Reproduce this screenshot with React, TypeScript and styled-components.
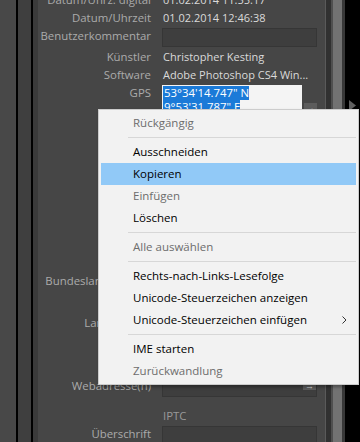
import { styled, createGlobalStyle } from "styled-components";

const Global = createGlobalStyle`
  html, body {
    margin: 0;
    padding: 0;
    background: #000;
    overflow: hidden;
  }
`;

const Screen = styled.div`
  position: relative;
  width: 360px;
  height: 442px;
  overflow: hidden;
  display: flex;
  font-family: "Open Sans", "Noto Sans", sans-serif;
  font-size: 11.4px;
`;

const Strip = styled.div<{ $w: number; $bg: string }>`
  flex: 0 0 ${(p) => p.$w}px;
  background: ${(p) => p.$bg};
`;

const Edge = styled.div`
  flex: 0 0 15px;
  background: #000;
  display: flex;
  justify-content: center;
  padding-top: 100px;
`;

const Panel = styled.div`
  flex: 0 0 287px;
  background: #464646;
  display: flex;
  flex-direction: column;
  overflow: hidden;
`;

const Rows = styled.div<{ $top?: number }>`
  display: grid;
  grid-template-columns: 113px 155px;
  column-gap: 11px;
  margin-top: ${(p) => p.$top ?? 0}px;
`;

const Label = styled.div<{ $h?: number }>`
  height: ${(p) => p.$h ?? 18}px;
  line-height: 18px;
  text-align: right;
  color: #ababab;
  white-space: nowrap;
`;

const Value = styled.div<{ $h?: number }>`
  height: ${(p) => p.$h ?? 18}px;
  line-height: 18px;
  font-size: 11px;
  color: #dadada;
  white-space: nowrap;
  overflow: hidden;
  padding-left: 1px;
`;

const Field = styled.div<{ $h?: number }>`
  height: ${(p) => p.$h ?? 19}px;
  margin: 1px 0;
  box-sizing: border-box;
  background: #3e3e3e;
  border: 1px solid #363636;
  position: relative;
`;

const GpsWrap = styled.div`
  display: flex;
  align-items: flex-start;
  gap: 2px;
  padding-top: 1px;
`;

const GpsBox = styled.div`
  width: 141px;
  height: 30px;
  background: #f4f4f4;
  padding: 1px;
  box-sizing: border-box;
  line-height: 14px;
  font-size: 11.4px;
`;

const Selected = styled.span`
  display: inline-block;
  background: #1b7ad8;
  color: #fff;
  padding-left: 1px;
  height: 14px;
`;

const ArrowBtn = styled.div<{ $top: number }>`
  width: 13px;
  height: 9px;
  margin-top: ${(p) => p.$top}px;
  background: #5c5c5c;
  color: #ddd;
  font-size: 9px;
  line-height: 9px;
  text-align: center;
`;

const FieldArrow = styled(ArrowBtn)`
  position: absolute;
  right: 0;
  top: 2px;
  margin: 0;
`;

const Divider = styled.div<{ $mt: number }>`
  height: 1px;
  background: #595959;
  margin-top: ${(p) => p.$mt}px;
`;

const Heading = styled.div`
  padding-left: 125px;
  color: #999;
  line-height: 18px;
  margin-top: 2px;
`;

const Menu = styled.div`
  position: absolute;
  left: 98px;
  top: 109px;
  width: 261px;
  box-sizing: border-box;
  background: #f2f2f2;
  border: 1px solid #cccccc;
  padding: 2px;
  box-shadow: 2px 2px 3px rgba(0, 0, 0, 0.35);
  font-family: "Open Sans", "Noto Sans", sans-serif;
  font-size: 11.5px;
`;

const Item = styled.div<{ $disabled?: boolean; $active?: boolean }>`
  height: 22px;
  line-height: 22px;
  padding-left: 32px;
  padding-right: 9px;
  display: flex;
  justify-content: space-between;
  align-items: center;
  color: ${(p) => (p.$disabled ? "#6d6d6d" : "#000")};
  background: ${(p) => (p.$active ? "#91c9f7" : "transparent")};
  white-space: nowrap;
`;

const Sep = styled.div`
  height: 7px;
  display: flex;
  align-items: center;
  padding-left: 27px;
  &::after {
    content: "";
    flex: 1;
    height: 1px;
    background: #d7d7d7;
  }
`;

const Chevron = () => (
  <svg width="5" height="8" viewBox="0 0 5 8">
    <path d="M0.5 0.5 L4 4 L0.5 7.5" stroke="#333" strokeWidth="1" fill="none" />
  </svg>
);

const Tri = () => (
  <svg width="7" height="11" viewBox="0 0 7 11">
    <path d="M0 0 L7 5.5 L0 11 Z" fill="#5f5f5f" />
  </svg>
);

export default function App() {
  return (
    <Screen>
      <Global />
      <Strip $w={16} $bg="#484848" />
      <Strip $w={2} $bg="#000" />
      <Strip $w={13} $bg="#3f3f3f" />
      <Strip $w={2} $bg="#000" />
      <Strip $w={5} $bg="#3a3a3a" />
      <Panel>
        <Rows $top={-9}>
          <Label>Datum/Uhrz. digital</Label>
          <Value>01.02.2014 11:55:17</Value>
          <Label>Datum/Uhrzeit</Label>
          <Value>01.02.2014 12:46:38</Value>
          <Label $h={21}>Benutzerkommentar</Label>
          <Field />
          <Label>Künstler</Label>
          <Value>Christopher Kesting</Value>
          <Label>Software</Label>
          <Value>Adobe Photoshop CS4 Win...</Value>
          <Label $h={32}>GPS</Label>
          <GpsWrap>
            <GpsBox>
              <Selected>53°34'14.747" N</Selected>
              <br />
              <Selected>9°53'31.787" E</Selected>
            </GpsBox>
            <ArrowBtn $top={18}>→</ArrowBtn>
          </GpsWrap>
          <Label>Höhe</Label>
          <Value>12 m</Value>
        </Rows>
        <Divider $mt={32} />
        <Rows $top={1}>
          <Label $h={21}>Titel</Label>
          <Field />
          <Label $h={21}>Motiv</Label>
          <Field />
          <Label $h={21}>Ort</Label>
          <Field />
          <Label $h={21}>Stadt</Label>
          <Field />
          <Label $h={21}>Kopie</Label>
          <Field />
          <Label $h={21}>Bundesland/Kanton</Label>
          <Field />
          <Label $h={21}>Name</Label>
          <Field />
          <Label $h={21}>Land/Region</Label>
          <Field />
          <Label $h={21}>Ersteller</Label>
          <Field />
          <Label $h={21}>E-Mail</Label>
          <Field />
          <Label $h={21}>Webadresse(n)</Label>
          <Field>
            <FieldArrow $top={0}>→</FieldArrow>
          </Field>
        </Rows>
        <Divider $mt={7} />
        <Heading>IPTC</Heading>
        <Rows>
          <Label $h={21}>Überschrift</Label>
          <Field $h={22} />
        </Rows>
      </Panel>
      <Strip $w={1} $bg="#5a5a5a" />
      <Strip $w={5} $bg="#313131" />
      <Strip $w={2} $bg="#4f4f4f" />
      <Strip $w={9} $bg="#727272" />
      <Strip $w={3} $bg="#383838" />
      <Edge>
        <Tri />
      </Edge>
      <Menu>
        <Item $disabled>Rückgängig</Item>
        <Sep />
        <Item>Ausschneiden</Item>
        <Item $active>Kopieren</Item>
        <Item $disabled>Einfügen</Item>
        <Item>Löschen</Item>
        <Sep />
        <Item $disabled>Alle auswählen</Item>
        <Sep />
        <Item>Rechts-nach-Links-Lesefolge</Item>
        <Item>Unicode-Steuerzeichen anzeigen</Item>
        <Item>
          Unicode-Steuerzeichen einfügen
          <Chevron />
        </Item>
        <Sep />
        <Item>IME starten</Item>
        <Item $disabled>Zurückwandlung</Item>
      </Menu>
    </Screen>
  );
}
